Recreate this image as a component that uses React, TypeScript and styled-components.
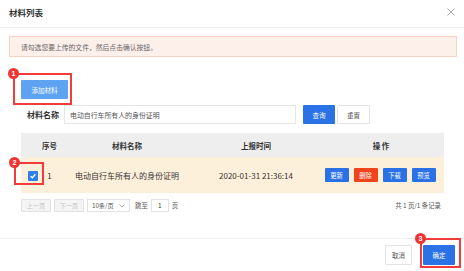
import React from "react";
import styled, { createGlobalStyle } from "styled-components";

const GlobalStyle = createGlobalStyle`
  html, body {
    margin: 0;
    padding: 0;
    background: #ffffff;
  }
  body {
    font-family: "Noto Sans CJK SC", "Noto Sans", sans-serif;
    color: #333333;
  }
  * {
    box-sizing: border-box;
  }
`;

interface Mark {
  top: number;
  right: number;
  bottom: number;
  left: number;
}

const Annotated = ({
  num,
  mark,
  children,
}: {
  num: number;
  mark: Mark;
  children: React.ReactNode;
}) => (
  <AnnotWrap>
    {children}
    <AnnotBox $m={mark}>
      <Badge>{num}</Badge>
    </AnnotBox>
  </AnnotWrap>
);

const App = () => {
  return (
    <>
      <GlobalStyle />
      <Dialog>
        <Header>
          <Title>材料列表</Title>
          <Close>
            <svg width="8" height="8" viewBox="0 0 8 8">
              <path d="M0.5 0.5 L7.5 7.5 M7.5 0.5 L0.5 7.5" stroke="#a8a8a8" strokeWidth="1" />
            </svg>
          </Close>
        </Header>
        <Body>
          <Alert>请勾选您要上传的文件，然后点击确认按钮。</Alert>
          <Content>
            <AddRow>
              <Annotated num={1} mark={{ top: 7, right: 4, bottom: 6, left: 8 }}>
                <Button $variant="light">添加材料</Button>
              </Annotated>
            </AddRow>
            <SearchRow>
              <Label>材料名称</Label>
              <Input>电动自行车所有人的身份证明</Input>
              <Button $variant="primary" $w={32}>查询</Button>
              <Button $variant="plain" $w={33}>重置</Button>
            </SearchRow>
            <Table>
              <HeadRow>
                <Cell $w={18} />
                <Cell $w={21}>序号</Cell>
                <Cell $w={134}>材料名称</Cell>
                <Cell $w={124}>上报时间</Cell>
                <Cell $w={126}>操 作</Cell>
              </HeadRow>
              <DataRow>
                <Cell $w={18}>
                  <Annotated num={2} mark={{ top: 8, right: 6, bottom: 4, left: 8 }}>
                    <Checkbox>
                      <svg width="8" height="8" viewBox="0 0 8 8">
                        <path d="M1.6 4.2 L3.3 5.8 L6.4 2.3" fill="none" stroke="#ffffff" strokeWidth="1.3" />
                      </svg>
                    </Checkbox>
                  </Annotated>
                </Cell>
                <Cell $w={21}>1</Cell>
                <Cell $w={134}>电动自行车所有人的身份证明</Cell>
                <Cell $w={124}>2020-01-31 21:36:14</Cell>
                <Cell $w={126}>
                  <Ops>
                    <SmallButton>更新</SmallButton>
                    <SmallButton $danger>删除</SmallButton>
                    <SmallButton>下载</SmallButton>
                    <SmallButton>预览</SmallButton>
                  </Ops>
                </Cell>
              </DataRow>
            </Table>
            <Pager>
              <PagerLeft>
                <PageButton>上一页</PageButton>
                <PageButton>下一页</PageButton>
                <SizeSelect>
                  10条/页
                  <svg width="6" height="4" viewBox="0 0 6 4">
                    <path d="M0.5 0.5 L3 3 L5.5 0.5" fill="none" stroke="#999999" strokeWidth="0.8" />
                  </svg>
                </SizeSelect>
                <PagerText>跳至</PagerText>
                <JumpInput>1</JumpInput>
                <PagerText>页</PagerText>
              </PagerLeft>
              <PagerText>共 1 页/1 条记录</PagerText>
            </Pager>
          </Content>
        </Body>
        <Footer>
          <Button $variant="plain" $w={27} $h={20}>取消</Button>
          <Annotated num={3} mark={{ top: 7, right: 6, bottom: 3, left: 3 }}>
            <Button $variant="primary" $w={32} $h={20}>确定</Button>
          </Annotated>
        </Footer>
      </Dialog>
    </>
  );
};

const Dialog = styled.div`
  width: 464px;
  height: 271px;
  display: flex;
  flex-direction: column;
  background: #ffffff;
  overflow: hidden;
`;

const Header = styled.div`
  height: 28px;
  padding: 0 9px 0 9px;
  display: flex;
  align-items: center;
  justify-content: space-between;
  border-bottom: 1px solid #f0f0f0;
`;

const Title = styled.div`
  font-size: 8.5px;
  font-weight: 700;
  color: #333333;
  margin-top: -3px;
`;

const Close = styled.div`
  width: 8px;
  height: 8px;
  display: flex;
  margin-top: -3px;
  margin-right: 0px;
`;

const Body = styled.div`
  flex: 1;
  padding-top: 8px;
`;

const Alert = styled.div`
  margin: 0 7px 0 9px;
  height: 21px;
  padding: 0 11px;
  display: flex;
  align-items: center;
  background: #fdefe9;
  border: 1px solid #f8d3c4;
  font-size: 6.8px;
  color: #666666;
`;

const Content = styled.div`
  padding: 0 20px 0 21px;
`;

const AddRow = styled.div`
  display: flex;
  margin-top: 23px;
`;

const AnnotWrap = styled.div`
  position: relative;
  display: inline-flex;
`;

const AnnotBox = styled.div<{ $m: Mark }>`
  position: absolute;
  top: ${({ $m }) => -$m.top}px;
  left: ${({ $m }) => -$m.left}px;
  right: ${({ $m }) => -$m.right}px;
  bottom: ${({ $m }) => -$m.bottom}px;
  border: 2px solid #f23b3b;
  pointer-events: none;
`;

const Badge = styled.div`
  position: absolute;
  top: -7px;
  left: -7px;
  width: 11px;
  height: 11px;
  border-radius: 50%;
  background: #f03434;
  color: #ffffff;
  font-family: "Liberation Sans", sans-serif;
  font-size: 7px;
  font-weight: 700;
  display: flex;
  align-items: center;
  justify-content: center;
  line-height: 1;
`;

const Button = styled.div<{ $variant: "light" | "primary" | "plain"; $w?: number; $h?: number }>`
  width: ${({ $w }) => ($w ? `${$w}px` : "47px")};
  height: ${({ $h }) => ($h ? `${$h}px` : "19px")};
  display: flex;
  align-items: center;
  justify-content: center;
  font-size: 6.5px;
  border-radius: 1px;
  background: ${({ $variant }) =>
    $variant === "light" ? "#5ea3f1" : $variant === "primary" ? "#2a72e5" : "#ffffff"};
  color: ${({ $variant }) => ($variant === "plain" ? "#555555" : "#ffffff")};
  border: 1px solid ${({ $variant }) => ($variant === "plain" ? "#e3e3e3" : "transparent")};
`;

const SearchRow = styled.div`
  display: flex;
  align-items: center;
  margin-top: 6px;
  gap: 2px;
`;

const Label = styled.div`
  font-size: 8px;
  font-weight: 700;
  color: #333333;
  width: 41px;
  padding-left: 6px;
`;

const Input = styled.div`
  width: 232px;
  height: 19px;
  margin-right: 5px;
  border: 1px solid #e6e6e6;
  padding-left: 5px;
  display: flex;
  align-items: center;
  font-size: 6.9px;
  color: #555555;
`;

const Table = styled.div`
  margin-top: 9px;
  width: 423px;
`;

const HeadRow = styled.div`
  display: flex;
  height: 24px;
  background: #eeeeee;
  font-size: 7.5px;
  font-weight: 700;
  color: #333333;
`;

const DataRow = styled.div`
  display: flex;
  height: 36px;
  background: #fdf0da;
  font-size: 8px;
  color: #333333;
`;

const Cell = styled.div<{ $w: number }>`
  width: ${({ $w }) => $w}px;
  flex-shrink: 0;
  display: flex;
  align-items: center;
  justify-content: center;
  white-space: nowrap;
`;

const Checkbox = styled.div`
  width: 10px;
  height: 10px;
  background: #2f7fe8;
  border-radius: 1px;
  display: flex;
  align-items: center;
  justify-content: center;
  margin-left: 6px;
  margin-top: 1px;
`;

const Ops = styled.div`
  display: flex;
  gap: 5px;
  margin-left: -2px;
`;

const SmallButton = styled.div<{ $danger?: boolean }>`
  width: 24px;
  height: 14px;
  border-radius: 1px;
  background: ${({ $danger }) => ($danger ? "#f0441c" : "#2b71e6")};
  color: #ffffff;
  font-size: 6.3px;
  display: flex;
  align-items: center;
  justify-content: center;
`;

const Pager = styled.div`
  margin-top: 6px;
  width: 420px;
  display: flex;
  align-items: center;
  justify-content: space-between;
`;

const PagerLeft = styled.div`
  display: flex;
  align-items: center;
  gap: 3px;
`;

const PageButton = styled.div`
  width: 30px;
  height: 13px;
  border: 1px solid #e2e2e2;
  background: #f4f4f4;
  color: #c4c4c4;
  font-size: 6.2px;
  display: flex;
  align-items: center;
  justify-content: center;
  border-radius: 1px;
`;

const SizeSelect = styled.div`
  width: 43px;
  height: 13px;
  border: 1px solid #e2e2e2;
  color: #555555;
  font-size: 6.2px;
  display: flex;
  align-items: center;
  justify-content: space-between;
  padding: 0 4px 0 4px;
  margin-right: 2px;
`;

const PagerText = styled.div`
  font-size: 6.4px;
  color: #555555;
`;

const JumpInput = styled.div`
  width: 18px;
  height: 13px;
  border: 1px solid #e2e2e2;
  font-size: 6.4px;
  color: #333333;
  display: flex;
  align-items: center;
  justify-content: center;
`;

const Footer = styled.div`
  height: 33px;
  border-top: 1px solid #eeeeee;
  display: flex;
  align-items: center;
  justify-content: flex-end;
  gap: 11px;
  padding: 0 9px 0 0;
`;

export default App;
